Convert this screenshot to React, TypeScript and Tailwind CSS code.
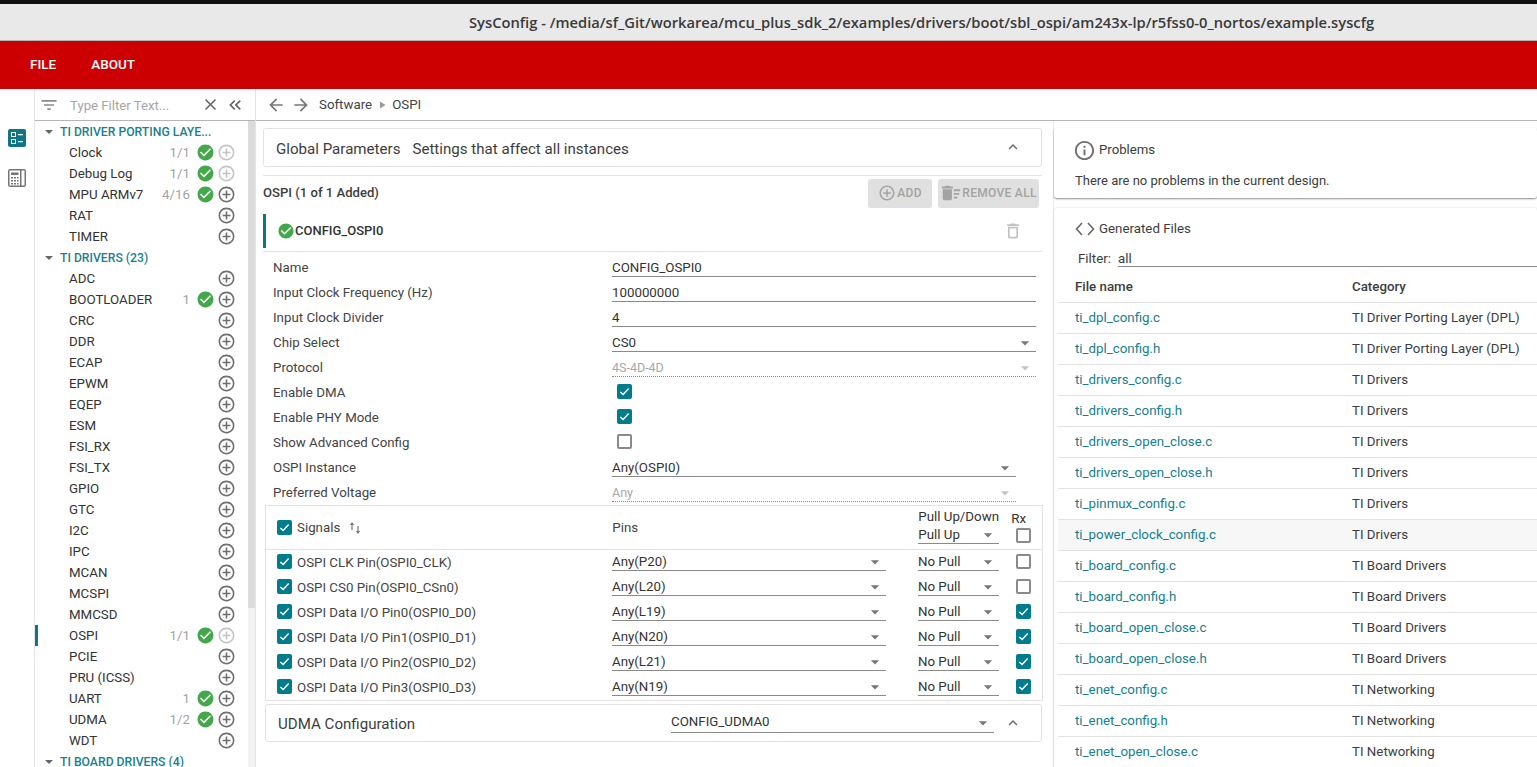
import React from "react";
import {
  MdAddCircleOutline,
  MdArrowBack,
  MdArrowDropDown,
  MdArrowForward,
  MdCheckCircle,
  MdClose,
  MdDeleteOutline,
  MdDeleteSweep,
  MdExpandLess,
  MdFilterList,
  MdInfoOutline,
  MdKeyboardDoubleArrowLeft,
  MdPlayArrow,
} from "react-icons/md";

type TreeItem = { name: string; count?: string; ok?: boolean; dim?: boolean; active?: boolean };

const portingItems: TreeItem[] = [
  { name: "Clock", count: "1/1", ok: true, dim: true },
  { name: "Debug Log", count: "1/1", ok: true, dim: true },
  { name: "MPU ARMv7", count: "4/16", ok: true },
  { name: "RAT" },
  { name: "TIMER" },
];

const driverItems: TreeItem[] = [
  { name: "ADC" },
  { name: "BOOTLOADER", count: "1", ok: true },
  { name: "CRC" },
  { name: "DDR" },
  { name: "ECAP" },
  { name: "EPWM" },
  { name: "EQEP" },
  { name: "ESM" },
  { name: "FSI_RX" },
  { name: "FSI_TX" },
  { name: "GPIO" },
  { name: "GTC" },
  { name: "I2C" },
  { name: "IPC" },
  { name: "MCAN" },
  { name: "MCSPI" },
  { name: "MMCSD" },
  { name: "OSPI", count: "1/1", ok: true, dim: true, active: true },
  { name: "PCIE" },
  { name: "PRU (ICSS)" },
  { name: "UART", count: "1", ok: true },
  { name: "UDMA", count: "1/2", ok: true },
  { name: "WDT" },
];

const signals = [
  { name: "OSPI CLK Pin(OSPI0_CLK)", pin: "Any(P20)", rx: false },
  { name: "OSPI CS0 Pin(OSPI0_CSn0)", pin: "Any(L20)", rx: false },
  { name: "OSPI Data I/O Pin0(OSPI0_D0)", pin: "Any(L19)", rx: true },
  { name: "OSPI Data I/O Pin1(OSPI0_D1)", pin: "Any(N20)", rx: true },
  { name: "OSPI Data I/O Pin2(OSPI0_D2)", pin: "Any(L21)", rx: true },
  { name: "OSPI Data I/O Pin3(OSPI0_D3)", pin: "Any(N19)", rx: true },
];

const files = [
  ["ti_dpl_config.c", "TI Driver Porting Layer (DPL)"],
  ["ti_dpl_config.h", "TI Driver Porting Layer (DPL)"],
  ["ti_drivers_config.c", "TI Drivers"],
  ["ti_drivers_config.h", "TI Drivers"],
  ["ti_drivers_open_close.c", "TI Drivers"],
  ["ti_drivers_open_close.h", "TI Drivers"],
  ["ti_pinmux_config.c", "TI Drivers"],
  ["ti_power_clock_config.c", "TI Drivers"],
  ["ti_board_config.c", "TI Board Drivers"],
  ["ti_board_config.h", "TI Board Drivers"],
  ["ti_board_open_close.c", "TI Board Drivers"],
  ["ti_board_open_close.h", "TI Board Drivers"],
  ["ti_enet_config.c", "TI Networking"],
  ["ti_enet_config.h", "TI Networking"],
  ["ti_enet_open_close.c", "TI Networking"],
];

const Check = ({ on }: { on: boolean }) =>
  on ? (
    <span className="w-[15px] h-[15px] rounded-[2px] bg-[#007c8c] flex items-center justify-center shrink-0">
      <svg width="11" height="11" viewBox="0 0 12 12" fill="none" stroke="#fff" strokeWidth="1.6">
        <path d="M1.5 6.500 4.500 9.200 10.500 2.800" />
      </svg>
    </span>
  ) : (
    <span className="block w-[15px] h-[15px] rounded-[2px] border-2 border-[#8a8a8a] bg-white shrink-0" />
  );

const TreeHeader = ({ label }: { label: string }) => (
  <div className="h-[21px] flex items-center pl-[9px] shrink-0">
    <span className="w-0 h-0 border-x-[4px] border-x-transparent border-t-[4px] border-t-[#666] mr-[7px] ml-[1px]" />
    <span className="pt-[1px] text-[12.2px] font-medium text-[#1a7f8e] whitespace-nowrap">{label}</span>
  </div>
);

const TreeRow = ({ item }: { item: TreeItem }) => (
  <div className="h-[21px] flex items-center relative shrink-0">
    {item.active && <span className="absolute left-[-1px] top-0 w-[4px] h-[21px] bg-[#0f7585]" />}
    <span className="pl-[34px] text-[13.3px] text-[#333] flex-1">{item.name}</span>
    {item.count && <span className="text-[13.3px] text-[#a3a3a3] mr-[6px]">{item.count}</span>}
    {item.ok && <MdCheckCircle size={19} className="text-[#43a849] mr-[2px]" />}
    <MdAddCircleOutline size={19} className={item.dim ? "text-[#c4c4c4] mr-[12px]" : "text-[#6e6e6e] mr-[12px]"} />
  </div>
);

const FormText = ({ label, value }: { label: string; value: string }) => (
  <div className="h-[25px] flex items-center pl-[10px] pr-[6px]">
    <span className="w-[339px] text-[13.3px] text-[#444]">{label}</span>
    <span className="flex-1 h-[18px] leading-[17px] border-b border-[#8a8a8a] text-[13.3px] text-[#333]">{value}</span>
  </div>
);

const FormSelect = ({ label, value, off, short }: { label: string; value: string; off?: boolean; short?: boolean }) => (
  <div className={short ? "h-[25px] flex items-center pl-[10px] pr-[26px]" : "h-[25px] flex items-center pl-[10px] pr-[6px]"}>
    <span className="w-[339px] text-[13.3px] text-[#444]">{label}</span>
    <span
      className={
        off
          ? "flex-1 h-[18px] leading-[17px] border-b border-dotted border-[#8a8a8a] text-[12.5px] text-[#a8a8a8] flex justify-between"
          : "flex-1 h-[18px] leading-[17px] border-b border-[#8a8a8a] text-[13.3px] text-[#333] flex justify-between"
      }
    >
      {value}
      <MdArrowDropDown size={20} className={off ? "text-[#c4c4c4] -mt-[1px] mr-[1px]" : "text-[#777] -mt-[1px] mr-[1px]"} />
    </span>
  </div>
);

const FormCheck = ({ label, on }: { label: string; on: boolean }) => (
  <div className="h-[25px] flex items-center pl-[10px] pr-[6px]">
    <span className="w-[344px] text-[13.3px] text-[#444]">{label}</span>
    <span className="-mt-[2px]">
      <Check on={on} />
    </span>
  </div>
);

const InlineSelect = ({ value, width }: { value: string; width: string }) => (
  <span className={`${width} h-[18px] leading-[17px] border-b border-[#8a8a8a] text-[13.3px] text-[#333] flex justify-between -mt-[1px]`}>
    {value}
    <MdArrowDropDown size={20} className="text-[#777] -mt-[1px] mr-[1px]" />
  </span>
);

export default function App() {
  return (
    <div className="w-[1537px] h-[767px] overflow-hidden bg-white flex flex-col font-['Roboto',sans-serif]">
      <div className="h-[4px] bg-[#111] shrink-0" />
      <div className="h-[37px] bg-[#e9e9e9] border-b border-[#b5b5b5] shrink-0 flex items-center pl-[469px] font-['Open_Sans',sans-serif] text-[14.73px] font-semibold text-[#3a3a3a] whitespace-nowrap">
        SysConfig - /media/sf_Git/workarea/mcu_plus_sdk_2/examples/drivers/boot/sbl_ospi/am243x-lp/r5fss0-0_nortos/example.syscfg
      </div>
      <div className="h-[48px] bg-[#cc0000] shrink-0 flex items-center pl-[30px] pb-[1px] gap-[35px] text-white text-[13.5px] font-medium">
        <span>FILE</span>
        <span>ABOUT</span>
      </div>

      <div className="flex-1 min-h-0 flex">
        {/* icon rail */}
        <div className="w-[34px] shrink-0 flex flex-col items-center pt-[40px] gap-[22px]">
          <svg width="18" height="18" viewBox="0 0 18 18">
            <rect width="18" height="18" rx="2" fill="#0f7585" />
            <g fill="none" stroke="#fff" strokeWidth="1">
              <rect x="3.500" y="3.500" width="4" height="4" />
              <rect x="3.500" y="10.500" width="4" height="4" />
            </g>
            <path d="M10 5h5v1.300h-5zM10 12h5v1.300h-5z" fill="#fff" />
          </svg>
          <svg width="18" height="18" viewBox="0 0 18 18">
            <rect width="18" height="18" rx="2" fill="#757575" />
            <rect x="1.500" y="1.500" width="10.500" height="15" fill="#fff" />
            <rect x="13.500" y="1.500" width="3" height="15" fill="#fff" />
            <path d="M3 3.500h7.500v2.500H3z" fill="#757575" />
            <path d="M3 8h2v1.500H3zM6 8h2v1.500H6zM9 8h1.500v1.500H9zM3 11h2v1.500H3zM6 11h2v1.500H6zM9 11h1.500v1.500H9zM3 14h2v1.500H3zM6 14h2v1.500H6zM9 14h1.500v1.500H9z" fill="#757575" />
          </svg>
        </div>

        {/* module tree */}
        <div className="w-[222px] shrink-0 border-x border-[#e4e4e4] flex flex-col min-h-0">
          <div className="h-[32px] shrink-0 border-b border-[#b5b5b5] flex items-center pl-[4px] pr-[10px]">
            <MdFilterList size={20} className="text-[#8a8a8a]" />
            <span className="ml-[11px] pt-[2px] flex-1 text-[13.2px] text-[#a6a6a6]">Type Filter Text...</span>
            <MdClose size={19} className="text-[#666] mr-[5px]" />
            <MdKeyboardDoubleArrowLeft size={20} className="text-[#666]" />
          </div>
          <div className="flex-1 min-h-0 flex overflow-hidden">
            <div className="flex-1 flex flex-col">
              <TreeHeader label="TI DRIVER PORTING LAYE..." />
              {portingItems.map((it) => (
                <TreeRow key={it.name} item={it} />
              ))}
              <TreeHeader label="TI DRIVERS (23)" />
              {driverItems.map((it) => (
                <TreeRow key={it.name} item={it} />
              ))}
              <TreeHeader label="TI BOARD DRIVERS (4)" />
            </div>
            <div className="w-[7px] shrink-0 bg-[#f2f2f2]">
              <div className="h-[487px] bg-[#dcdcdc]" />
            </div>
          </div>
        </div>

        {/* main */}
        <div className="flex-1 min-w-0 flex flex-col">
          <div className="h-[32px] shrink-0 border-b border-[#b5b5b5] flex items-center pl-[10px] text-[13.3px] text-[#444]">
            <MdArrowBack size={20} className="text-[#777]" />
            <MdArrowForward size={20} className="text-[#777] ml-[5px]" />
            <span className="ml-[8px]">Software</span>
            <MdPlayArrow size={12} className="text-[#999] mx-[4px]" />
            <span>OSPI</span>
          </div>

          <div className="flex-1 min-h-0 flex">
            {/* config column */}
            <div className="w-[798px] shrink-0 pl-[7px] pr-[11px] border-r border-[#ececec] flex flex-col">
              <div className="mt-[7px] h-[39px] border border-[#e2e2e2] rounded-[3px] flex items-center pl-[12px] pr-[19px] text-[15.1px] text-[#3d3d3d] shrink-0">
                <span className="pt-[3px]">Global Parameters</span>
                <span className="pt-[3px] ml-[12px] flex-1">Settings that affect all instances</span>
                <MdExpandLess size={18} className="text-[#666] -mt-[2px]" />
              </div>
              <div className="mt-[8px] h-[35px] border-t border-[#e2e2e2] flex items-center justify-between pr-[3px] shrink-0">
                <span className="text-[13.1px] font-medium text-[#3d3d3d]">OSPI (1 of 1 Added)</span>
                <div className="flex gap-[6px] text-[12px] font-medium text-[#a3a3a3] tracking-[0.3px]">
                  <span className="w-[64px] h-[29px] rounded-[3px] bg-[#e0e0e0] flex items-center justify-center gap-[1px]">
                    <MdAddCircleOutline size={18} />
                    ADD
                  </span>
                  <span className="w-[101px] h-[29px] rounded-[3px] bg-[#e0e0e0] flex items-center justify-center">
                    <MdDeleteSweep size={22} />
                    REMOVE ALL
                  </span>
                </div>
              </div>
              <div className="mt-[4px] h-[34px] border-l-[3px] border-[#0f7585] flex items-center pl-[11px] pr-[19px] shrink-0">
                <MdCheckCircle size={18} className="text-[#43a849]" />
                <span className="text-[13px] font-medium text-[#333] flex-1">CONFIG_OSPI0</span>
                <MdDeleteOutline size={20} className="text-[#c2c2c2]" />
              </div>
              <div className="mt-[3px] border-t border-[#e2e2e2] pt-[3px] shrink-0">
                <FormText label="Name" value="CONFIG_OSPI0" />
                <FormText label="Input Clock Frequency (Hz)" value="100000000" />
                <FormText label="Input Clock Divider" value="4" />
                <FormSelect label="Chip Select" value="CS0" />
                <FormSelect label="Protocol" value="4S-4D-4D" off />
                <FormCheck label="Enable DMA" on />
                <FormCheck label="Enable PHY Mode" on />
                <FormCheck label="Show Advanced Config" on={false} />
                <FormSelect label="OSPI Instance" value="Any(OSPI0)" short />
                <FormSelect label="Preferred Voltage" value="Any" off short />
              </div>

              {/* signals */}
              <div className="ml-[2px] -mr-[1px] border border-[#e2e2e2] shrink-0 h-[196px]">
                <div className="h-[44px] border-b border-[#e2e2e2] flex items-center pl-[11px] text-[13.3px] text-[#444]">
                  <Check on />
                  <span className="ml-[5px]">Signals</span>
                  <svg width="12" height="14" viewBox="0 0 12 14" className="ml-[9px]" fill="#777">
                    <path d="M3 1 .8 4h1.600v5h1.200V4h1.600zM8.400 5v5H6.800L9 13l2.200-3H9.600V5z" />
                  </svg>
                  <span className="ml-[251px] w-[306px]">Pins</span>
                  <div className="w-[81px] flex flex-col leading-[16px] -mt-[2px]">
                    <span className="text-[#333] whitespace-nowrap">Pull Up/Down</span>
                    <InlineSelect value="Pull Up" width="w-[81px] mt-[1px]" />
                  </div>
                  <div className="ml-[12px] w-[21px] flex flex-col items-start leading-[16px] gap-[1px] -mt-[2px]">
                    <span className="text-[#333]">Rx</span>
                    <span className="ml-[5px]">
                      <Check on={false} />
                    </span>
                  </div>
                </div>
                {signals.map((s) => (
                  <div key={s.name} className="h-[25px] flex items-center pl-[11px] text-[13.3px] text-[#444]">
                    <span className="-mt-[2px]">
                      <Check on />
                    </span>
                    <span className="ml-[5px] w-[315px]">{s.name}</span>
                    <InlineSelect value={s.pin} width="w-[274px]" />
                    <span className="w-[32px]" />
                    <InlineSelect value="No Pull" width="w-[81px]" />
                    <span className="ml-[17px] -mt-[2px]">
                      <Check on={s.rx} />
                    </span>
                  </div>
                ))}
              </div>

              <div className="mt-[3px] ml-[2px] h-[38px] border border-[#e2e2e2] rounded-[3px] flex items-center pl-[12px] pr-[19px] text-[15.1px] text-[#3d3d3d] shrink-0">
                <span className="w-[393px] shrink-0 pt-[3px]">UDMA Configuration</span>
                <span className="w-[323px] shrink-0 h-[20px] leading-[18px] border-b border-[#8a8a8a] text-[13.3px] text-[#333] flex justify-between">
                  CONFIG_UDMA0
                  <MdArrowDropDown size={20} className="text-[#777] mr-[1px]" />
                </span>
                <MdExpandLess size={18} className="text-[#666] ml-[10px]" />
              </div>
            </div>

            {/* right column */}
            <div className="flex-1 min-w-0 flex flex-col">
              <div className="mt-[7px] h-[70px] rounded-[3px] shadow-[0_1px_2px_rgba(0,0,0,0.45)] px-[21px] shrink-0">
                <div className="h-[44px] flex items-center gap-[3px] text-[13.2px] text-[#3d3d3d]">
                  <MdInfoOutline size={23} className="text-[#6e6e6e] -ml-[2px]" />
                  Problems
                </div>
                <div className="-mt-[1px] text-[13px] text-[#3d3d3d]">There are no problems in the current design.</div>
              </div>
              <div className="mt-[10px] flex-1 min-h-0 overflow-hidden rounded-t-[3px] shadow-[0_0_2px_rgba(0,0,0,0.2)] pl-[4px]">
                <div className="h-[42px] flex items-center pl-[17px] text-[13.3px] text-[#3d3d3d]">
                  <svg width="20" height="14" viewBox="0 0 20 14" fill="none" stroke="#666" strokeWidth="1.6" className="mr-[4px]">
                    <path d="M7 1 1.500 7 7 13M13 1l5.500 6L13 13" />
                  </svg>
                  Generated Files
                </div>
                <div className="-mt-[1px] h-[18px] flex text-[13.3px] text-[#3d3d3d] pl-[20px]">
                  <span className="w-[40px]">Filter:</span>
                  <span className="flex-1 border-b border-[#8a8a8a]">all</span>
                </div>
                <div className="h-[36px] flex items-center border-b border-[#e2e2e2] pl-[17px] pt-[4px] text-[13.3px] font-medium text-[#3d3d3d]">
                  <span className="w-[277px]">File name</span>
                  <span>Category</span>
                </div>
                {files.map(([f, c], i) => (
                  <div
                    key={f}
                    className={
                      i === 7
                        ? "h-[31px] flex items-center border-b border-[#e2e2e2] pl-[17px] text-[13.3px] bg-[#f7f7f7]"
                        : "h-[31px] flex items-center border-b border-[#e2e2e2] pl-[17px] text-[13.3px]"
                    }
                  >
                    <span className="w-[277px] text-[#14808f]">{f}</span>
                    <span className="text-[#3d3d3d]">{c}</span>
                  </div>
                ))}
              </div>
            </div>
          </div>
        </div>
      </div>
    </div>
  );
}
